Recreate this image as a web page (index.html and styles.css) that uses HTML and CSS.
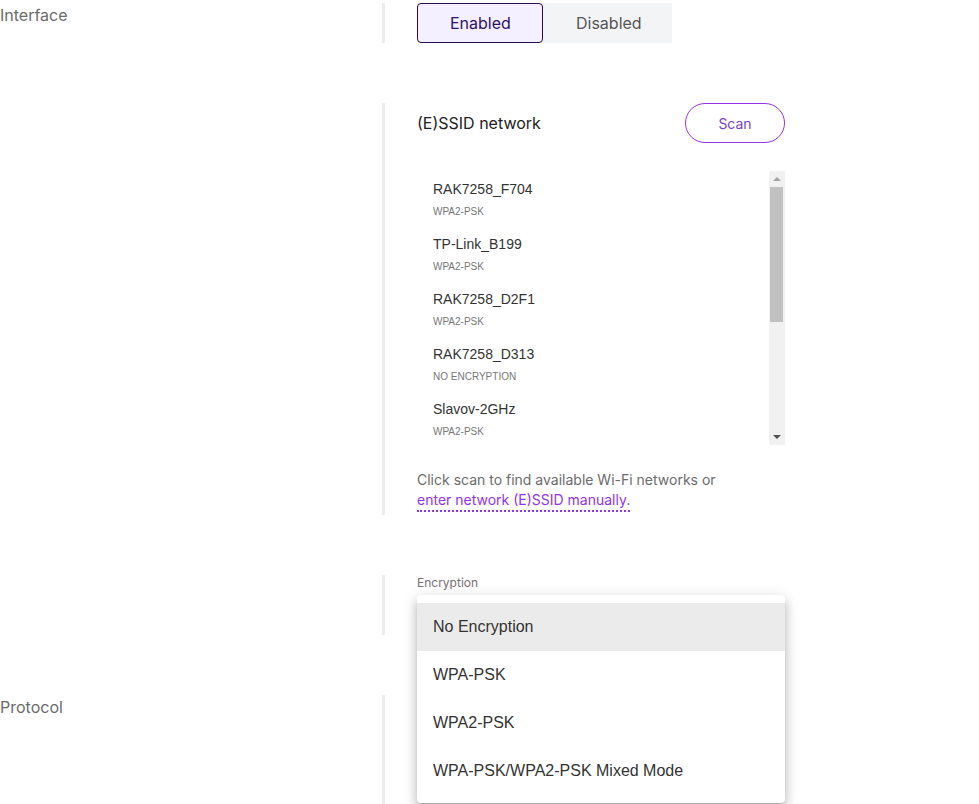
FILE: index.html
```html
<!DOCTYPE html>
<html>
<head>
<meta charset="utf-8">
<link rel="stylesheet" href="styles.css">
</head>
<body>
<div class="form">
  <div class="row">
    <div class="label">Interface</div>
    <div class="field">
      <div class="toggle">
        <button class="tbtn active">Enabled</button>
        <button class="tbtn">Disabled</button>
      </div>
    </div>
  </div>

  <div class="row">
    <div class="label"></div>
    <div class="field">
      <div class="ssid-head">
        <span class="ssid-title">(E)SSID network</span>
        <button class="scan">Scan</button>
      </div>
      <div class="listbox">
        <ul class="netlist">
          <li><div class="nname">RAK7258_F704</div><div class="nsub">WPA2-PSK</div></li>
          <li><div class="nname">TP-Link_B199</div><div class="nsub">WPA2-PSK</div></li>
          <li><div class="nname">RAK7258_D2F1</div><div class="nsub">WPA2-PSK</div></li>
          <li><div class="nname">RAK7258_D313</div><div class="nsub">No encryption</div></li>
          <li><div class="nname">Slavov-2GHz</div><div class="nsub">WPA2-PSK</div></li>
          <li><div class="nname">RAK7249_A1C2</div><div class="nsub">WPA2-PSK</div></li>
          <li><div class="nname">Office-5G</div><div class="nsub">WPA-PSK</div></li>
          <li><div class="nname">Guest</div><div class="nsub">No encryption</div></li>
          <li><div class="nname">RAK7268_0B11</div><div class="nsub">WPA2-PSK</div></li>
        </ul>
        <div class="sbar">
          <div class="sbtn"><svg width="8" height="4" viewBox="0 0 8 4"><polygon points="0,4 4,0 8,4" fill="#a3a3a3"/></svg></div>
          <div class="strack"><div class="sthumb"></div></div>
          <div class="sbtn"><svg width="8" height="4" viewBox="0 0 8 4"><polygon points="0,0 8,0 4,4" fill="#505050"/></svg></div>
        </div>
      </div>
      <p class="hint">Click scan to find available Wi-Fi networks or<br><a class="manual">enter network (E)SSID manually.</a></p>
    </div>
  </div>

  <div class="row">
    <div class="label"></div>
    <div class="field enc">
      <div class="flabel">Encryption</div>
      <div class="select"></div>
      <ul class="menu">
        <li class="sel">No Encryption</li>
        <li>WPA-PSK</li>
        <li>WPA2-PSK</li>
        <li>WPA-PSK/WPA2-PSK Mixed Mode</li>
      </ul>
    </div>
  </div>

  <div class="row">
    <div class="label">Protocol</div>
    <div class="field tall"></div>
  </div>
</div>
</body>
</html>
```

FILE: styles.css
```css
* { box-sizing: border-box; }
html, body { margin: 0; padding: 0; background: #fff; }
body { font-family: Inter, "Noto Sans", sans-serif; color: #222; }

.form {
  display: flex;
  flex-direction: column;
  gap: 60px;
  padding-top: 3px;
}
.row {
  display: grid;
  grid-template-columns: 382px 403px;
}
.label {
  font-size: 16px;
  line-height: 24px;
  color: #6b6b6b;
}
.field {
  border-left: 3px solid #ececec;
  padding-left: 32px;
}

.toggle {
  display: flex;
  width: 255px;
  background: #f3f4f6;
}
.tbtn {
  font-family: Inter, sans-serif;
  font-size: 16px;
  height: 40px;
  padding: 0 32px;
  border: 1px solid transparent;
  border-radius: 4px;
  background: transparent;
  color: #555;
  cursor: pointer;
}
.tbtn.active {
  background: #f5f0ff;
  border-color: #2e0a4e;
  color: #2e1065;
  width: 126px;
}
.tbtn:not(.active) { flex: 1; }

.ssid-head {
  display: flex;
  justify-content: space-between;
  align-items: center;
  height: 40px;
}
.ssid-title { font-size: 16px; color: #222; }
.scan {
  width: 100px;
  height: 40px;
  border: 1px solid #9333ea;
  border-radius: 20px;
  background: #fff;
  color: #7e3fc4;
  font-family: Inter, sans-serif;
  font-size: 14px;
}

.listbox {
  display: flex;
  margin-top: 28px;
  height: 274px;
}
.netlist {
  flex: 1;
  list-style: none;
  margin: 0;
  padding: 0;
  overflow: hidden;
  font-family: "Liberation Sans", Arial, sans-serif;
}
.netlist li {
  padding: 10px 16px 8px;
  height: 55px;
}
.nname { font-size: 14px; line-height: 16px; color: #333; }
.nsub {
  font-size: 10px;
  line-height: 12px;
  margin-top: 9px;
  color: #777;
  text-transform: uppercase;
}

.sbar {
  width: 16px;
  display: flex;
  flex-direction: column;
  background: #f1f1f1;
}
.sbtn {
  height: 16px;
  display: flex;
  align-items: center;
  justify-content: center;
}
.sbtn svg { display: block; }
.strack { flex: 1; padding: 0 2px 0 1px; }
.sthumb { height: 135px; background: #c1c1c1; }

.hint {
  margin: 25px 0 0;
  font-size: 14px;
  line-height: 20px;
  color: #6b6b6b;
  padding-bottom: 5px;
}
.manual {
  color: #9333ea;
  border-bottom: 2px dotted #9333ea;
  padding-bottom: 2px;
  cursor: pointer;
}

.enc { position: relative; }
.flabel {
  font-size: 12px;
  line-height: 14px;
  padding-top: 1px;
  color: #7a6f74;
}
.select { height: 40px; margin-top: 5px; }
.menu {
  position: absolute;
  z-index: 10;
  top: 20px;
  left: 32px;
  width: 368px;
  margin: 0;
  padding: 8px 0;
  list-style: none;
  background: #fff;
  border-radius: 4px;
  box-shadow: 0 5px 5px -3px rgba(0,0,0,.2), 0 8px 10px 1px rgba(0,0,0,.14), 0 3px 14px 2px rgba(0,0,0,.12);
  font-family: "Liberation Sans", Arial, sans-serif;
}
.menu li {
  height: 48px;
  line-height: 48px;
  padding: 0 16px;
  font-size: 16px;
  color: #333;
}
.menu li.sel { background: #ebebeb; }

.tall { min-height: 140px; }
```
